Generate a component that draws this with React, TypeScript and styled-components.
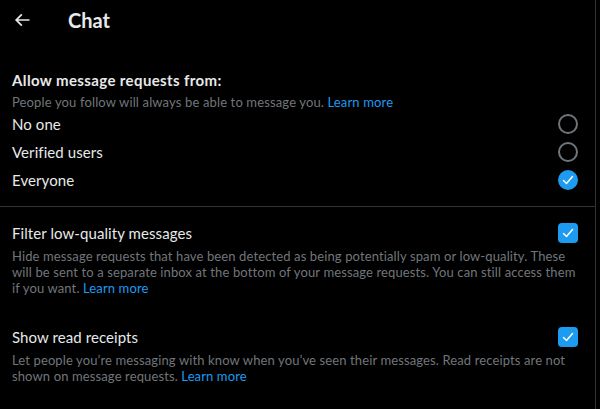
import React from "react";
import styled, { createGlobalStyle } from "styled-components";

const Global = createGlobalStyle`
  html, body { margin: 0; padding: 0; background: #000; }
  body { font-family: "Segoe UI", Lato, "Noto Sans", sans-serif; color: #e7e9ea; }
  * { box-sizing: border-box; }
`;

const Page = styled.div`
  width: 596px;
  min-height: 409px;
  border-right: 1px solid #2f3336;
  background: #000;
`;

const Header = styled.div`
  height: 53px;
  display: flex;
  align-items: flex-start;
  padding: 8px 16px 0 12px;
`;

const BackButton = styled.div`
  width: 56px;
  height: 24px;
  display: flex;
  align-items: center;
  color: #e7e9ea;
`;

const Title = styled.h2`
  margin: 0;
  font-size: 20px;
  font-weight: 700;
  line-height: 24px;
  color: #e7e9ea;
`;

const Section = styled.div<{ $border?: boolean }>`
  padding: 16px 16px 12px 12px;
  border-bottom: ${(p) => (p.$border ? "1px solid #2f3336" : "none")};
`;

const SectionTitle = styled.div`
  font-size: 15px;
  font-weight: 700;
  line-height: 20px;
  letter-spacing: 0.38px;
  padding-top: 1px;
`;

const Hint = styled.div`
  font-size: 13px;
  line-height: 16px;
  letter-spacing: 0.14px;
  color: #71767b;
  margin-top: 3px;
  padding-top: 1px;
`;

const Link = styled.a`
  color: #1d9bf0;
  text-decoration: none;
`;

const Row = styled.div`
  display: flex;
  align-items: center;
  justify-content: space-between;
  height: 28px;
  font-size: 15px;
  line-height: 20px;
  letter-spacing: 0.08px;
`;

const Radio = styled.span<{ $on?: boolean }>`
  width: 20px;
  height: 20px;
  border-radius: 50%;
  margin-right: 1px;
  display: flex;
  align-items: center;
  justify-content: center;
  border: ${(p) => (p.$on ? "none" : "2px solid #6e767d")};
  background: ${(p) => (p.$on ? "#1d9bf0" : "transparent")};
`;

const Box = styled.span`
  width: 20px;
  height: 20px;
  border-radius: 4px;
  margin-right: 1px;
  display: flex;
  align-items: center;
  justify-content: center;
  background: #1d9bf0;
`;

const Option = styled.div`
  padding: 12px 16px 15px 12px;
`;

const OptionHead = styled.div`
  display: flex;
  align-items: center;
  justify-content: space-between;
  font-size: 15px;
  line-height: 20px;
  letter-spacing: 0.08px;
  min-height: 28px;
`;

const OptionHint = styled.div`
  font-size: 13px;
  line-height: 16px;
  letter-spacing: 0.12px;
  color: #71767b;
  padding-top: 1px;
`;

const Check = () => (
  <svg width="12" height="12" viewBox="0 0 24 24">
    <path d="M3 13l6 6L21 5" fill="none" stroke="#fff" strokeWidth="3" strokeLinecap="round" strokeLinejoin="round" />
  </svg>
);

const Arrow = () => (
  <svg width="20" height="20" viewBox="0 0 24 24" fill="#e7e9ea">
    <path d="M7.414 13l5.043 5.04-1.414 1.42L3.586 12l7.457-7.46 1.414 1.42L7.414 11H21v2H7.414z" />
  </svg>
);

export default function App() {
  return (
    <>
      <Global />
      <Page>
        <Header>
          <BackButton>
            <Arrow />
          </BackButton>
          <Title>Chat</Title>
        </Header>
        <Section $border>
          <SectionTitle>Allow message requests from:</SectionTitle>
          <Hint>
            People you follow will always be able to message you. <Link>Learn more</Link>
          </Hint>
          <Row>
            No one
            <Radio />
          </Row>
          <Row>
            Verified users
            <Radio />
          </Row>
          <Row>
            Everyone
            <Radio $on>
              <Check />
            </Radio>
          </Row>
        </Section>
        <Option>
          <OptionHead>
            Filter low-quality messages
            <Box>
              <Check />
            </Box>
          </OptionHead>
          <OptionHint>
            Hide message requests that have been detected as being potentially spam or low-quality. These will be sent to a separate inbox at the bottom of your message requests. You can still access them if you want. <Link>Learn more</Link>
          </OptionHint>
        </Option>
        <Option>
          <OptionHead>
            Show read receipts
            <Box>
              <Check />
            </Box>
          </OptionHead>
          <OptionHint>
            Let people you’re messaging with know when you’ve seen their messages. Read receipts are not shown on message requests. <Link>Learn more</Link>
          </OptionHint>
        </Option>
      </Page>
    </>
  );
}
